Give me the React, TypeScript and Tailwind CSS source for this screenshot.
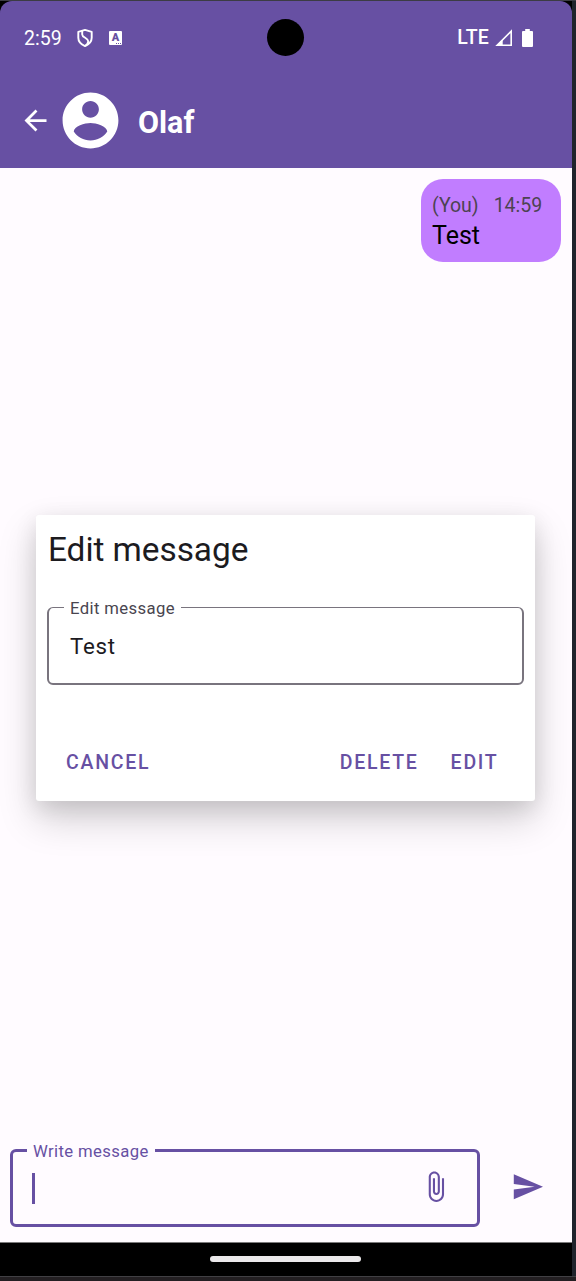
import React from "react";

const ROBOTO = "font-['Roboto',sans-serif]";

function Glyph({ d, className }: { d: string; className: string }) {
  return (
    <svg viewBox="0 0 24 24" fill="currentColor" className={className} aria-hidden="true">
      <path d={d} />
    </svg>
  );
}

const BACK = "M20 11H7.83l5.59-5.59L12 4l-8 8 8 8 1.41-1.41L7.83 13H20v-2z";
const ACCOUNT =
  "M12 2C6.48 2 2 6.48 2 12s4.48 10 10 10 10-4.48 10-10S17.52 2 12 2zm0 3c1.66 0 3 1.34 3 3s-1.34 3-3 3-3-1.34-3-3 1.34-3 3-3zm0 14.2c-2.5 0-4.71-1.28-6-3.22.03-1.99 4-3.08 6-3.08 1.99 0 5.97 1.09 6 3.08-1.29 1.94-3.5 3.22-6 3.22z";
const CLIP =
  "M16.5 6v11.5c0 2.21-1.79 4-4 4s-4-1.79-4-4V5c0-1.38 1.12-2.5 2.5-2.5s2.5 1.12 2.5 2.5v10.5c0 .55-.45 1-1 1s-1-.45-1-1V6H10v9.5c0 1.38 1.12 2.5 2.5 2.5s2.5-1.12 2.5-2.5V5c0-2.21-1.79-4-4-4S7 2.79 7 5v12.5c0 3.04 2.46 5.5 5.5 5.5s5.5-2.46 5.5-5.5V6h-1.5z";
const SEND = "M2.01 21L23 12 2.01 3 2 10l15 2-15 2z";

function StatusBar() {
  return (
    <div className="relative flex h-[73px] items-center pl-6 pr-[39px] text-[19.5px] leading-none">
      <span className="w-[38px] whitespace-nowrap pt-[2px]">2:59</span>
      <svg viewBox="0 0 18 20" className="ml-[14px] h-5 w-[18px]" fill="none" stroke="currentColor" strokeWidth="1.9">
        <path d="M9 1.9 15.7 3.9V9.7C15.7 13.8 12.6 16.5 9 18.1 5.4 16.5 2.3 13.8 2.3 9.7V3.9Z" strokeLinejoin="round" />
        <path d="M6.2 2.9V6.4C6.2 9.5 12.2 10 12.2 13.2 12.2 15 11 16.6 9.3 17.7" />
      </svg>
      <span className="relative ml-[15px] flex h-[14px] w-[13px] justify-center rounded-[1px] bg-white pt-px text-[11px] font-black text-[#6750a1]">
        A
        <span className="absolute bottom-px right-px flex gap-px">
          <i className="size-px bg-[#6750a1]" />
          <i className="size-px bg-[#6750a1]" />
          <i className="size-px bg-[#6750a1]" />
        </span>
      </span>
      <div className="absolute left-[267px] top-[18px] size-[36.5px] rounded-full bg-black" />
      <span className="ml-auto pt-px text-[19.5px] font-medium tracking-[0.2px]">LTE</span>
      <svg viewBox="0 0 18 18" className="ml-[6px] size-[18px]" fill="none" stroke="currentColor" strokeWidth="1.6">
        <path d="M2.2 16.2H16.2V2.2Z" />
        <path d="M1 17 7.7 10.3V17Z" fill="currentColor" stroke="none" />
      </svg>
      <svg viewBox="0 0 11 18" className="ml-[9px] h-[18px] w-[11px]" fill="currentColor">
        <path d="M3.2 0H7.8V2H10Q11 2 11 3V17Q11 18 10 18H1Q0 18 0 17V3Q0 2 1 2H3.2Z" />
      </svg>
    </div>
  );
}

function Header() {
  return (
    <header className="h-[167px] rounded-t-[12px] bg-[#6750a3] text-white">
      <StatusBar />
      <div className="flex h-[93px] items-center pl-[19px]">
        <Glyph d={BACK} className="size-[33px]" />
        <Glyph d={ACCOUNT} className="ml-[5px] size-[67px]" />
        <h1 className="ml-[14px] pt-[4px] text-[30.5px] font-bold leading-9">Olaf</h1>
      </div>
    </header>
  );
}

function MessageBubble() {
  return (
    <div className="ml-auto mr-[11px] mt-[11px] h-[83px] w-[140px] rounded-[22px] bg-[#c17dff] pl-[11px] pt-[15px]">
      <div className="flex gap-[15px] text-[19.5px] leading-6 text-[#4d4351]">
        <span>(You)</span>
        <span>14:59</span>
      </div>
      <p className="mt-[3px] text-[25px] leading-[30px] text-black">Test</p>
    </div>
  );
}

function ActionButton({ children }: { children: string }) {
  return <button className="text-[19.5px] font-medium leading-6 tracking-[1.75px] text-[#6750a3]">{children}</button>;
}

function EditDialog() {
  return (
    <div className="ml-9 mt-[253px] h-[286px] w-[499px] rounded-[3px] bg-white shadow-[0_18px_38px_rgba(0,0,0,0.18),0_6px_22px_rgba(0,0,0,0.1)]">
      <h2 className="pl-3 pt-[15px] text-[33.4px] leading-10 tracking-[-0.05px] text-[#1c1b1f]">Edit message</h2>
      <div className="relative mx-[11px] mt-[37px] h-[78px] rounded-[6px] border-2 border-t border-[#79747e] pl-[21px] pt-[24px]">
        <label className="absolute left-[15px] top-[-9px] whitespace-nowrap bg-white px-1.5 text-[16.7px] leading-5 tracking-[0.38px] text-[#49454f]">
          Edit message
        </label>
        <span className="block text-[22.3px] leading-[29px] tracking-[0.7px] text-[#1c1b1f]">Test</span>
      </div>
      <div className="mt-[66px] flex pl-[30px] pr-[36.5px]">
        <ActionButton>CANCEL</ActionButton>
        <div className="ml-auto flex gap-[32px]">
          <ActionButton>DELETE</ActionButton>
          <ActionButton>EDIT</ActionButton>
        </div>
      </div>
    </div>
  );
}

function Composer() {
  return (
    <div className="mt-auto mb-[15px] flex items-center pl-2.5 text-[#6750a3]">
      <div className="relative flex h-[78px] w-[470px] items-center rounded-[6px] border-[3px] border-[#6750a3] pl-[19px] pr-[25px]">
        <label className="absolute left-[14px] top-[-10px] whitespace-nowrap bg-[#fffbff] px-1.5 text-[16.7px] leading-5 tracking-[0.38px]">
          Write message
        </label>
        <span className="h-[31px] w-[3px] bg-[#6750a3]" />
        <Glyph d={CLIP} className="ml-auto mb-[2px] size-[33.4px]" />
      </div>
      <Glyph d={SEND} className="ml-[31px] mb-[2px] size-[33.4px]" />
    </div>
  );
}

export default function App() {
  return (
    <div className={`flex h-[1281px] w-[576px] flex-col bg-[#20242c] ${ROBOTO}`}>
      <div className="h-px shrink-0 bg-[#3c3c44]" />
      <div className="flex h-[1275px] w-[572px] flex-col bg-black">
        <Header />
        <main className="flex h-[1074px] flex-col bg-[#fffbff]">
          <MessageBubble />
          <EditDialog />
          <Composer />
        </main>
        <div className="h-px bg-[#7b7a7b]" />
        <div className="ml-[210px] mt-[13px] h-[6px] w-[151px] rounded-full bg-[#ebe9eb]" />
      </div>
      <div className="h-px bg-[#414044]" />
      <div className="flex-1 bg-[#231f22]" />
    </div>
  );
}
